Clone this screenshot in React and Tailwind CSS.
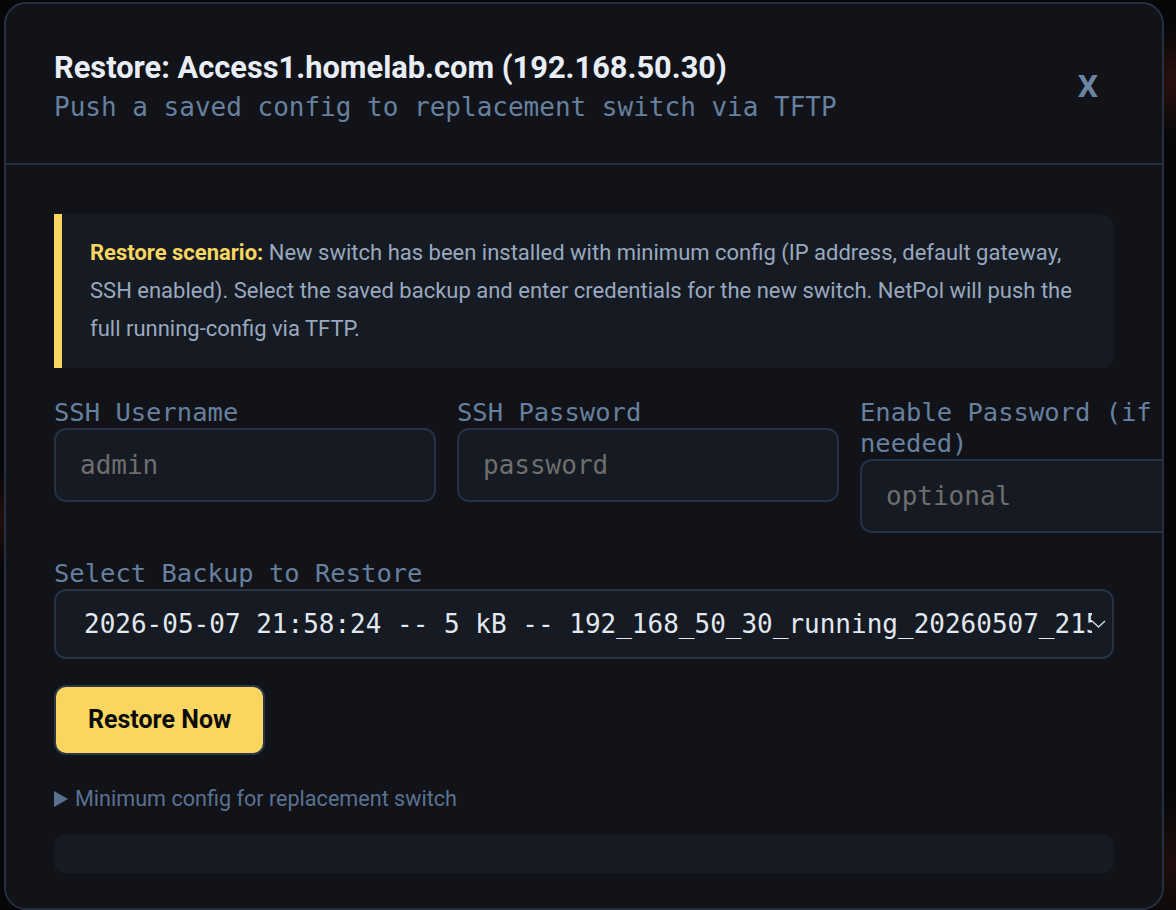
import React from 'react';

const MONO = "font-['DejaVu_Sans_Mono','Liberation_Mono',monospace]";
const SANS = "font-['Roboto','Liberation_Sans',sans-serif]";

function Field({ label, placeholder, type = 'text' }) {
  return (
    <label className="flex flex-col">
      <span className={`${MONO} text-[25.5px] leading-[31px] text-[#67809f]`}>{label}</span>
      <input
        type={type}
        placeholder={placeholder}
        className={`${MONO} h-[74px] w-full rounded-[12px] border-2 border-[#263244] bg-[#161b23] px-[24px] text-[26px] text-[#e2e8f0] outline-none placeholder:text-[#6e6e6e]`}
      />
    </label>
  );
}

function BackupSelect({ value }) {
  return (
    <div className="relative flex h-[70px] items-center rounded-[12px] border-2 border-[#263244] bg-[#161b23] pl-[28px] pr-[20px]">
      <span className={`${MONO} block overflow-hidden whitespace-nowrap text-[26px] leading-[31px] text-[#e2e8f0]`}>
        {value}
      </span>
      <svg
        className="absolute right-[6px] top-1/2 -translate-y-1/2"
        width="15"
        height="8"
        viewBox="0 0 15 8"
        fill="none"
      >
        <polyline points="1,1 7.5,7 14,1" stroke="#cbd5e1" strokeWidth="1.5" />
      </svg>
    </div>
  );
}

export default function App() {
  return (
    <div className="relative h-[910px] w-full overflow-hidden bg-[#060708] pl-[4px] pt-[2px]">
      {/* blurred page behind the backdrop */}
      <div className="pointer-events-none absolute inset-0 bg-[radial-gradient(circle_at_0%_57%,rgba(120,30,30,0.25),transparent_4%),radial-gradient(circle_at_100%_9%,rgba(110,35,30,0.35),transparent_4%),radial-gradient(circle_at_100%_95%,rgba(90,30,25,0.3),transparent_5%)]" />

      <section className="relative h-[908px] w-[1160px] overflow-hidden rounded-[22px] border-2 border-[#243041] bg-[#111318]">
        <header className="flex items-center justify-between border-b-2 border-[#243041] px-[48px] pb-[40px] pt-[45px]">
          <div>
            <h2 className={`${SANS} text-[30.8px] font-bold leading-[38px] text-[#e9eef6]`}>
              Restore: Access1.homelab.com (192.168.50.30)
            </h2>
            <p className={`${MONO} mt-[5px] text-[26px] leading-[31px] text-[#67809f]`}>
              Push a saved config to replacement switch via TFTP
            </p>
          </div>
          <button className={`${SANS} px-4 text-[32px] font-bold text-[#6c84a3]`}>X</button>
        </header>

        <div className="px-[48px] pt-[49px]">
          <div className={`${SANS} rounded-r-xl border-l-8 border-[#f8d660] bg-[#161b23] py-[20px] pl-[28px] pr-[20px] text-[22px] leading-[38px] text-[#9aa8bf]`}>
            <strong className="font-bold text-[#f8d660]">Restore scenario:</strong> New switch has been
            installed with minimum config (IP address, default gateway, SSH enabled). Select the saved
            backup and enter credentials for the new switch. NetPol will push the full running-config via
            TFTP.
          </div>

          <div className="mt-[29px] grid grid-cols-[repeat(3,382px)] items-start gap-x-[21px]">
            <Field label="SSH Username" placeholder="admin" />
            <Field label="SSH Password" placeholder="password" type="password" />
            <Field label="Enable Password (if needed)" placeholder="optional" type="password" />
          </div>

          <div className="mt-[25px]">
            <div className={`${MONO} text-[25.5px] leading-[31px] text-[#67809f]`}>Select Backup to Restore</div>
            <BackupSelect value="2026-05-07 21:58:24 -- 5 kB -- 192_168_50_30_running_20260507_215824.cfg" />
          </div>

          <button
            className={`${SANS} mt-[26px] h-[70px] rounded-[12px] border-2 border-[#2a3648] bg-[#f8d660] px-8 text-[25px] font-bold text-[#0b0b0b]`}
          >
            Restore Now
          </button>

          <div className={`${SANS} mt-[25px] flex items-center gap-[7px] text-[21.6px] leading-[38px] text-[#5b7190]`}>
            <svg width="14" height="16" viewBox="0 0 14 16">
              <polygon points="0,0 14,8 0,16" fill="#5b7190" />
            </svg>
            <span>Minimum config for replacement switch</span>
          </div>

          <div className="mt-[16px] h-[39px] rounded-[10px] bg-[#161b23]" />
        </div>
      </section>
    </div>
  );
}
